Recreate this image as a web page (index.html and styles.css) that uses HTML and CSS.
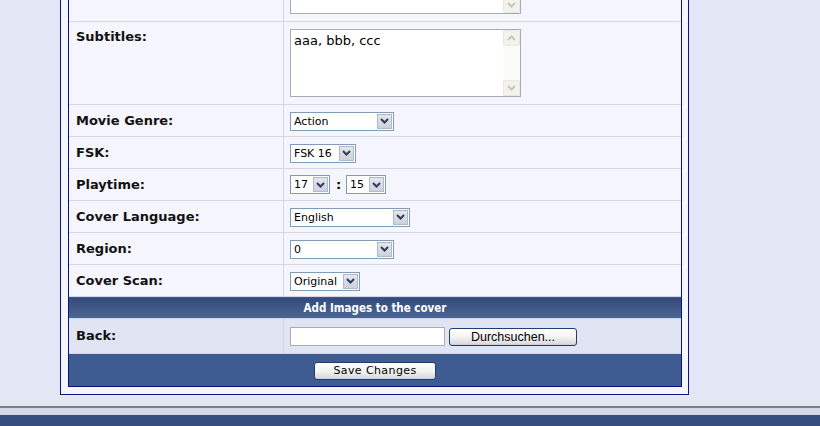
FILE: index.html
```html
<!DOCTYPE html>
<html lang="en">
<head>
  <meta charset="UTF-8">
  <title>Edit Cover</title>
  <link rel="stylesheet" href="styles.css">
</head>
<body>
  <div class="page">
    <div class="frame">
      <div class="inner">
        <table class="form-table">
          <tr class="row-tall">
            <td class="label"></td>
            <td class="value">
              <div class="textbox">
                <textarea></textarea>
                <div class="scrollbar">
                  <span class="sb-btn"><svg width="9" height="6" viewBox="0 0 9 6"><path d="M1 5 L4.5 1.5 L8 5" fill="none" stroke="#c6c6bd" stroke-width="2"/></svg></span>
                  <span class="sb-btn"><svg width="9" height="6" viewBox="0 0 9 6"><path d="M1 1 L4.5 4.5 L8 1" fill="none" stroke="#c6c6bd" stroke-width="2"/></svg></span>
                </div>
              </div>
            </td>
          </tr>
          <tr class="row-tall">
            <td class="label">Subtitles:</td>
            <td class="value">
              <div class="textbox">
                <textarea>aaa, bbb, ccc</textarea>
                <div class="scrollbar">
                  <span class="sb-btn"><svg width="9" height="6" viewBox="0 0 9 6"><path d="M1 5 L4.5 1.5 L8 5" fill="none" stroke="#c6c6bd" stroke-width="2"/></svg></span>
                  <span class="sb-btn"><svg width="9" height="6" viewBox="0 0 9 6"><path d="M1 1 L4.5 4.5 L8 1" fill="none" stroke="#c6c6bd" stroke-width="2"/></svg></span>
                </div>
              </div>
            </td>
          </tr>
          <tr>
            <td class="label">Movie Genre:</td>
            <td class="value">
              <span class="select sel-genre"><select><option>Action</option></select><span class="arrow"><svg width="9" height="6" viewBox="0 0 9 6"><path d="M1 1 L4.5 4.5 L8 1" fill="none" stroke="#2f3b58" stroke-width="2"/></svg></span></span>
            </td>
          </tr>
          <tr>
            <td class="label">FSK:</td>
            <td class="value">
              <span class="select sel-fsk"><select><option>FSK 16</option></select><span class="arrow"><svg width="9" height="6" viewBox="0 0 9 6"><path d="M1 1 L4.5 4.5 L8 1" fill="none" stroke="#2f3b58" stroke-width="2"/></svg></span></span>
            </td>
          </tr>
          <tr>
            <td class="label">Playtime:</td>
            <td class="value">
              <div class="time">
                <span class="select sel-time"><select><option>17</option></select><span class="arrow"><svg width="9" height="6" viewBox="0 0 9 6"><path d="M1 1 L4.5 4.5 L8 1" fill="none" stroke="#2f3b58" stroke-width="2"/></svg></span></span>
                <b>:</b>
                <span class="select sel-time"><select><option>15</option></select><span class="arrow"><svg width="9" height="6" viewBox="0 0 9 6"><path d="M1 1 L4.5 4.5 L8 1" fill="none" stroke="#2f3b58" stroke-width="2"/></svg></span></span>
              </div>
            </td>
          </tr>
          <tr>
            <td class="label">Cover Language:</td>
            <td class="value">
              <span class="select sel-lang"><select><option>English</option></select><span class="arrow"><svg width="9" height="6" viewBox="0 0 9 6"><path d="M1 1 L4.5 4.5 L8 1" fill="none" stroke="#2f3b58" stroke-width="2"/></svg></span></span>
            </td>
          </tr>
          <tr>
            <td class="label">Region:</td>
            <td class="value">
              <span class="select sel-genre"><select><option>0</option></select><span class="arrow"><svg width="9" height="6" viewBox="0 0 9 6"><path d="M1 1 L4.5 4.5 L8 1" fill="none" stroke="#2f3b58" stroke-width="2"/></svg></span></span>
            </td>
          </tr>
          <tr>
            <td class="label">Cover Scan:</td>
            <td class="value">
              <span class="select sel-scan"><select><option>Original</option></select><span class="arrow"><svg width="9" height="6" viewBox="0 0 9 6"><path d="M1 1 L4.5 4.5 L8 1" fill="none" stroke="#2f3b58" stroke-width="2"/></svg></span></span>
            </td>
          </tr>
          <tr>
            <th class="section" colspan="2">Add Images to the cover</th>
          </tr>
          <tr class="row-alt">
            <td class="label">Back:</td>
            <td class="value">
              <div class="file">
                <input type="text" class="file-name">
                <button type="button" class="btn btn-browse">Durchsuchen...</button>
              </div>
            </td>
          </tr>
          <tr>
            <td class="submit" colspan="2">
              <button type="submit" class="btn btn-save">Save Changes</button>
            </td>
          </tr>
        </table>
      </div>
    </div>
  </div>
  <div class="site-footer">
    <div class="footer-bar"></div>
  </div>
</body>
</html>
```

FILE: styles.css
```css
body {
  margin: 0;
  background: #e3e6f5;
  font-family: 'DejaVu Sans', Verdana, sans-serif;
  color: #000;
  overflow: hidden;
}
.page {
  width: 629px;
  margin: -70px 0 0 60px;
}
.frame {
  border: 1px solid #0c1282;
  background: #f5f6fd;
  padding: 7px 6px 7px 7px;
}
.inner {
  border: 1px solid #0c1282;
}
.form-table {
  width: 612px;
  border-collapse: collapse;
  border-spacing: 0;
}
.form-table td {
  background: #f4f5fd;
  border-bottom: 1px solid #d3d6e6;
  padding: 0;
  height: 31px;
  vertical-align: middle;
}
.form-table tr:last-child td {
  border-bottom: none;
}
.label {
  width: 207px;
  padding: 0 0 0 7px !important;
  border-right: 1px solid #d3d6e6;
  font-size: 13px;
  font-weight: bold;
  line-height: 16px;
  color: #111;
}
.value {
  padding: 0 0 0 6px !important;
}
.row-tall td {
  vertical-align: top;
  height: 75px;
}
.row-tall .label {
  padding-top: 7px !important;
}
.row-tall .value {
  padding-top: 7px !important;
}
.row-alt td {
  background: #e1e4f2;
  height: 34px;
}

/* textarea with xp style scrollbar */
.textbox {
  display: flex;
  width: 229px;
  height: 66px;
  border: 1px solid #a6adb7;
  background: #fff;
}
.textbox textarea {
  flex: 1;
  border: none;
  outline: none;
  resize: none;
  overflow: hidden;
  padding: 3px 3px;
  margin: 0;
  font-family: 'DejaVu Sans', Verdana, sans-serif;
  font-size: 13px;
  line-height: 16px;
  color: #000;
}
.scrollbar {
  width: 17px;
  background: #fbfbf8;
  display: flex;
  flex-direction: column;
  justify-content: space-between;
}
.sb-btn {
  height: 16px;
  background: #f3f2ec;
  border: 1px solid #e9e8e0;
  border-radius: 2px;
  box-sizing: border-box;
  display: flex;
  align-items: center;
  justify-content: center;
}

/* selects */
.select {
  display: inline-flex;
  align-items: stretch;
  height: 19px;
  box-sizing: border-box;
  border: 1px solid #7f9db9;
  background: #fff;
  vertical-align: middle;
}
.select select {
  appearance: none;
  -webkit-appearance: none;
  border: none;
  outline: none;
  background: transparent;
  flex: 1;
  min-width: 0;
  padding: 0 0 0 3px;
  margin: 0;
  font-family: 'DejaVu Sans', Verdana, sans-serif;
  font-size: 11px;
  color: #000;
}
.select .arrow {
  width: 15px;
  margin: 1px;
  box-sizing: border-box;
  border: 1px solid #b1b8c8;
  background: linear-gradient(#e4e6ee, #cdd1dc);
  display: flex;
  align-items: center;
  justify-content: center;
}
.sel-genre { width: 104px; }
.sel-fsk { width: 66px; }
.sel-time { width: 40px; }
.sel-lang { width: 120px; }
.sel-scan { width: 70px; }
.time {
  display: flex;
  align-items: center;
  gap: 6px;
}
.time b {
  font-size: 13px;
  width: 4px;
}

/* section header and footer row */
.section {
  height: 21px;
  padding: 0;
  background: linear-gradient(#334b7b, #4c6693);
  border-bottom: 1px solid #d3d6e6;
  color: #fff;
  font-family: 'DejaVu Sans Condensed', 'DejaVu Sans', sans-serif;
  font-size: 11.5px;
  font-weight: bold;
  text-align: center;
}
.form-table td.submit {
  background: #3e5c91;
  height: 32px;
  text-align: center;
}

/* file field and buttons */
.file {
  display: flex;
  align-items: flex-end;
  gap: 4px;
  margin-top: 1px;
}
.file-name {
  width: 155px;
  height: 19px;
  box-sizing: border-box;
  border: 1px solid #a6adb7;
  margin: 0;
  padding: 0 3px;
  background: #fff;
}
.btn {
  height: 18px;
  box-sizing: border-box;
  border: 1px solid #1f3f6e;
  border-radius: 3px;
  background: linear-gradient(#ffffff 0%, #f3f3f0 50%, #dcdce4 90%, #c8c8d4 100%);
  padding: 0;
  margin: 0;
  color: #000;
  cursor: pointer;
}
.btn-browse {
  width: 128px;
  font-family: 'Liberation Sans', Arial, sans-serif;
  font-size: 12.5px;
}
.btn-save {
  width: 122px;
  font-family: 'DejaVu Sans', Verdana, sans-serif;
  font-size: 11px;
  letter-spacing: 0.4px;
  vertical-align: middle;
}

.site-footer {
  margin-top: 11px;
  border-top: 2px solid #7d7d7d;
  background: #d4d6e5;
  padding-top: 7px;
}
.footer-bar {
  height: 40px;
  background: #344d7e;
}
```
